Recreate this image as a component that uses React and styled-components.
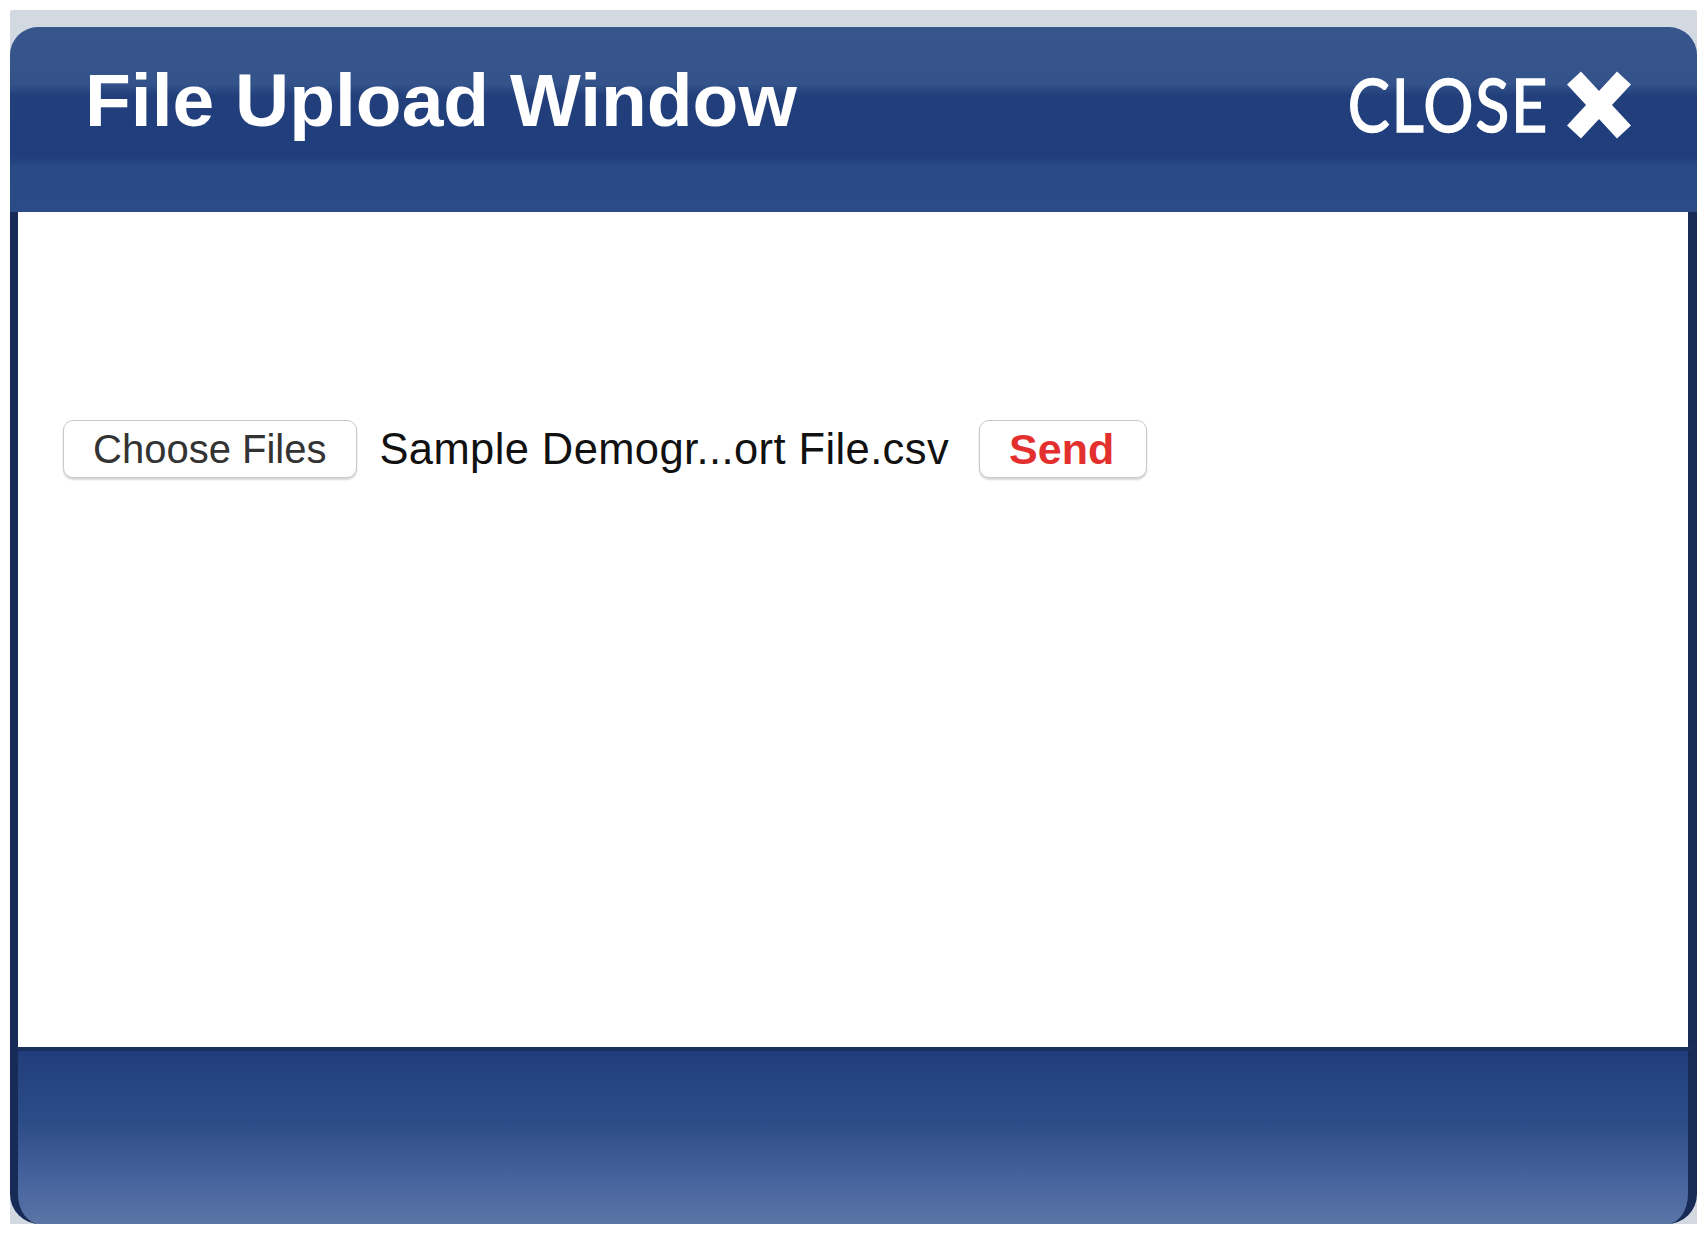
import React from 'react';
import styled, { createGlobalStyle } from 'styled-components';

const GlobalStyle = createGlobalStyle`
  body {
    margin: 0;
    background: #ffffff;
    font-family: "Liberation Sans", Arial, sans-serif;
  }
`

const Page = styled.div`
  padding: 10px 9px 10px 10px;
`

const Frame = styled.div`
  width: 1687px;
  background: #d3d9e1;
  padding-top: 17px;
  border-radius: 2px 2px 0 0;
`

const Header = styled.div`
  height: 185px;
  box-sizing: border-box;
  display: flex;
  justify-content: space-between;
  align-items: flex-start;
  padding: 36px 64px 0 75px;
  border-radius: 28px 28px 0 0;
  background: linear-gradient(
    to bottom,
    #36568c 0%,
    #33538a 31%,
    #223f7c 37%,
    #1f3e7b 70%,
    #2a4a85 76%,
    #2b4b86 100%
  );
`

const Title = styled.h1`
  margin: 0;
  font-family: "Liberation Sans", Arial, sans-serif;
  font-weight: 700;
  font-size: 75px;
  line-height: 1;
  color: #ffffff;
`

const CloseButton = styled.div`
  display: flex;
  align-items: center;
  gap: 16px;
  margin-top: 5px;
  cursor: pointer;
`

const CloseLabel = styled.span`
  display: inline-block;
  font-family: Lato, "DejaVu Sans", sans-serif;
  font-weight: 400;
  font-size: 73px;
  letter-spacing: 2px;
  line-height: 1;
  color: #ffffff;
  -webkit-text-stroke: 1.5px #ffffff;
  transform: scaleX(0.86);
  transform-origin: right center;
`

const Body = styled.div`
  height: 835px;
  box-sizing: border-box;
  background: #ffffff;
  border-left: 8px solid #172b56;
  border-right: 9px solid #172b56;
  padding: 208px 0 0 45px;
`

const FileRow = styled.div`
  display: flex;
  align-items: center;
`

const PlainButton = styled.button`
  height: 58px;
  box-sizing: border-box;
  padding: 0 ${p => p.$bold ? '32px' : '30px'} 0 29px;
  background: #ffffff;
  border: 1px solid #c9c9c9;
  border-radius: 10px;
  box-shadow: 0 2px 2px rgba(0, 0, 0, 0.16);
  font-family: "Liberation Sans", Arial, sans-serif;
  font-size: ${p => p.$bold ? '43px' : '40px'};
  font-weight: ${p => p.$bold ? 700 : 400};
  color: ${p => p.$bold ? '#e3302f' : '#333333'};
  line-height: 1;
`

const FileName = styled.span`
  margin: 0 30px 0 22px;
  font-family: "Liberation Sans", Arial, sans-serif;
  font-size: 43.5px;
  letter-spacing: 0.4px;
  color: #111111;
`

const Footer = styled.div`
  height: 177px;
  box-sizing: border-box;
  border-top: 4px solid #192f5c;
  border-left: 8px solid #172b56;
  border-right: 9px solid #172b56;
  border-radius: 0 0 30px 30px;
  background: linear-gradient(to bottom, #1f3e7b 0%, #2c4c87 40%, #4a67a0 80%, #5a75a5 100%);
`

const CrossIcon = () => (
  <svg width="68" height="72" viewBox="0 0 68 72" style={{ overflow: 'visible' }}>
    <path d="M9 9 L59 63 M59 9 L9 63" stroke="#ffffff" strokeWidth="19" strokeLinecap="butt" fill="none" />
  </svg>
)

export default function App() {
  return (
    <Page>
      <GlobalStyle />
      <Frame>
        <Header>
          <Title>File Upload Window</Title>
          <CloseButton>
            <CloseLabel>CLOSE</CloseLabel>
            <CrossIcon />
          </CloseButton>
        </Header>
        <Body>
          <FileRow>
            <PlainButton>Choose Files</PlainButton>
            <FileName>Sample Demogr...ort File.csv</FileName>
            <PlainButton $bold>Send</PlainButton>
          </FileRow>
        </Body>
        <Footer />
      </Frame>
    </Page>
  );
}
